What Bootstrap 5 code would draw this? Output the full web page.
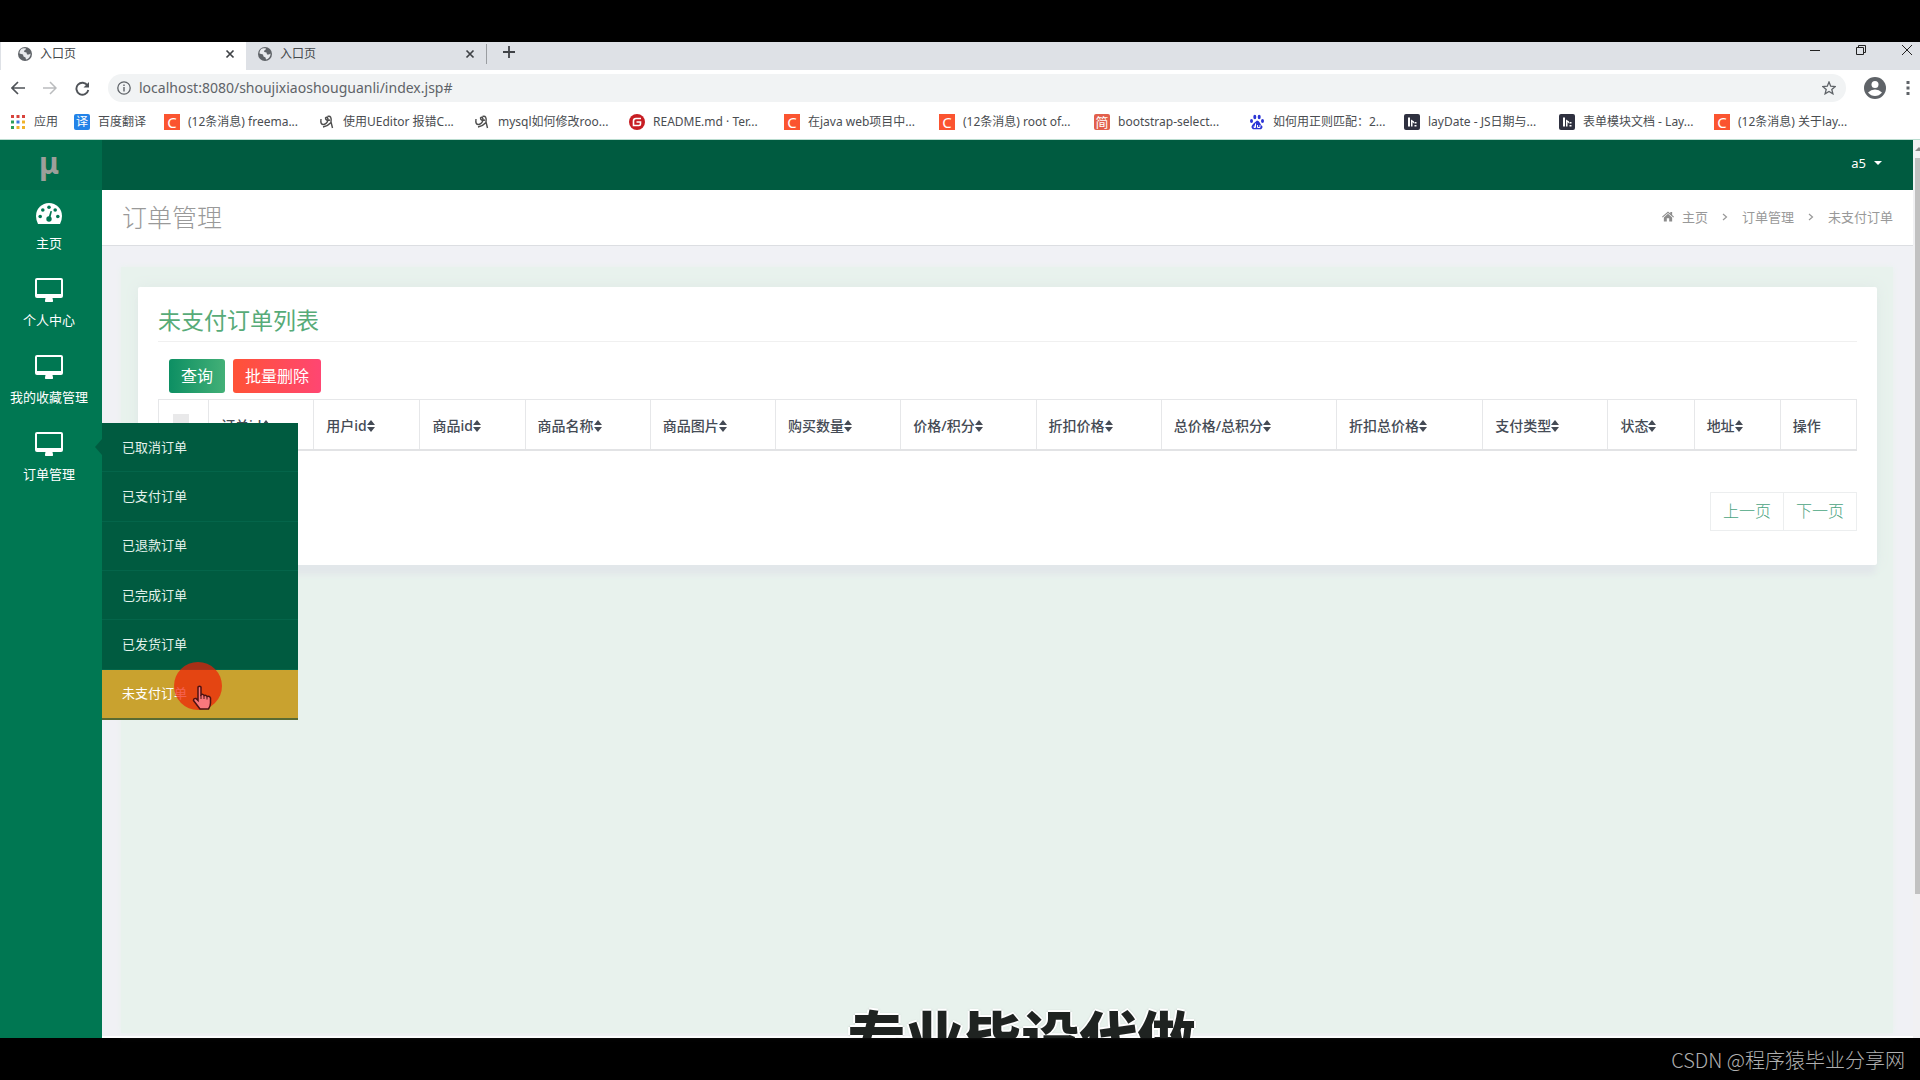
<!DOCTYPE html>
<html lang="zh-CN">
<head>
<meta charset="utf-8">
<meta name="viewport" content="width=device-width, initial-scale=1">
<title>订单管理</title>
<link href="https://cdn.jsdelivr.net/npm/bootstrap@5.3.0/dist/css/bootstrap.min.css" rel="stylesheet">
<style>
  body { font-family: "Noto Sans", "Noto Sans CJK SC", sans-serif; font-size: 13px; line-height: 20px; background: #000; color: #4a4e57; }
  a { text-decoration: none; color: inherit; }
  svg { display: block; flex: none; }
  .edge { height: 42px; flex: none; background: #000; }
  .edge-text { font-family: "Noto Sans CJK SC", sans-serif; font-size: 20px; color: #b0b0b0; font-weight: 300; padding: 2px 15px 0 0; }

  /* browser chrome */
  .strip { height: 28px; background: #dee1e6; font-size: 12px; color: #45494d; }
  .strip button, .tools button { border: 0; background: none; padding: 0; color: inherit; }
  .tab { width: 240px; padding: 0 3px 5px 12px; }
  .tab-on { width: 246px; background: #fff; padding-left: 17px; border-left: 1px solid #dee1e6; }
  .tab-off { border-bottom-left-radius: 8px; }
  .tab-sep { width: 1px; height: 20px; background: #9a9da1; margin-top: 2px; }
  .win { gap: 34px; padding-right: 7px; color: #222; }
  .tools { height: 36px; background: #fff; gap: 18px; padding: 0 6px 0 11px; color: #5f6368; }
  .addr { height: 28px; background: #f1f3f4; border-radius: 14px; padding: 0 10px 0 9px; gap: 8px; }
  .addr input { border: 0; background: none; outline: 0; padding: 0; font-size: 14px; color: #5f6368; min-width: 0; }
  .marks { height: 34px; background: #fff; font-size: 12px; color: #4a4d51; padding-left: 10px; border-bottom: 1px solid #b9dccf; overflow: hidden; white-space: nowrap; }
  .marks a { display: flex; align-items: center; gap: 8px; width: 155px; height: 31px; flex: none; }
  .marks .m-apps { width: 64px; }
  .marks .m-fanyi { width: 90px; }
  .m-ico { width: 16px; height: 16px; line-height: 16px; text-align: center; color: #fff; flex: none; font-size: 13px; }
  .m-c { background: #fb5430; font-size: 15px; }
  .m-blue { background: #2383e8; border-radius: 2px; font-size: 12px; }
  .m-jian { background: #e2604c; border-radius: 2px; font-size: 13px; }

  /* side navigation */
  .side { width: 102px; flex: none; background: #007752; color: #fff; position: relative; z-index: 5; }
  .logo { height: 50px; background: #006c4b; color: #9d9f9b; font-size: 30px; font-weight: 700; line-height: 46px; text-align: center; padding-right: 4px; }
  .side-item { position: relative; height: 77px; padding-top: 10px; }
  .side-link { display: flex; flex-direction: column; align-items: center; gap: 7px; padding-right: 4px; white-space: nowrap; }
  .side-pic { height: 26px; display: flex; align-items: center; }
  .fly { position: absolute; left: 100%; top: 2px; width: 196px; height: 297px; background: #005b40; border-bottom: 2px solid #5a6b33; }
  .fly::before { content: ""; position: absolute; left: -7px; top: 16px; border: 8px solid transparent; border-left-width: 0; border-right: 7px solid #005b40; }
  .fly a { display: flex; align-items: center; flex: 1; padding: 0 0 1px 20px; color: #e4f2ec; border-bottom: 1px solid #04654a; }
  .fly a.now { background: #c9a22f; color: #fff; border: 0; }
  .spot { position: absolute; left: 72px; top: 239px; width: 48px; height: 48px; border-radius: 50%; background: rgba(240, 30, 5, .7); }
  .hand { position: absolute; left: 90px; top: 262px; }

  /* main area */
  .top { height: 50px; background: #005b40; color: #fff; padding: 0 31px 5px 0; }
  .top button { border: 0; background: none; color: #fff; padding: 0; font-size: 13px; }
  .heading { height: 56px; background: #fff; border-bottom: 1px solid #dcdee2; padding: 0 20px 2px; }
  .heading h1 { font-size: 25px; font-weight: 300; color: #999; margin: 0; line-height: 30px; }
  .crumbs { color: #999; gap: 14px; }
  .scene { background: #f0f1f5; padding: 21px 20px 3px 19px; border-bottom: 2px solid #fff; }
  .green-zone { background: #e8f2ed; padding: 20px 16px 20px 17px; box-shadow: 0 0 6px #e8f2ed; }
  .panel { background: #fff; border-radius: 2px; padding: 17px 20px 34px; box-shadow: 0 11px 6px -2px #e2e7ea, 0 0 14px #dfe9e6; }
  .panel h2 { font-size: 23px; line-height: 32px; font-weight: 400; color: #57ab78; margin: 0; padding-bottom: 5px; border-bottom: 1px solid #f0f0f0; }
  .acts { padding: 17px 11px 6px; gap: 8px; }
  .acts .btn { font-size: 16px; line-height: 20px; padding: 7px 12px; height: 34px; border: 0; border-radius: 3px; color: #fff; }
  .b-find { background: linear-gradient(90deg, #0d8f63, #43b077); }
  .b-del { background: linear-gradient(90deg, #ff5236, #ff4672); }
  .orders { table-layout: fixed; margin: 0 0 41px; font-size: 14px; border-color: #e6e7e9; --bs-table-color: #454b55; }
  .orders th { padding: 16px 0 13px 12px; font-weight: 500; line-height: 20px; white-space: nowrap; border-bottom: 2px solid #e2e3e5; }
  .orders th.pick { padding: 0 0 0 14px; vertical-align: top; }
  .orders th > svg { display: inline-block; margin-top: -3px; }
  .pick input { appearance: none; width: 16px; height: 16px; margin: 14px 0 0; background: #e9e9ea; display: block; }
  .w50 { width: 50px } .w76 { width: 76px } .w86 { width: 86px } .w105 { width: 105px } .w106 { width: 106px } .w125 { width: 125px }
  .w135 { width: 135px } .w146 { width: 146px } .w175 { width: 175px }
  .pagination { margin: 0; --bs-pagination-border-radius: 0; }
  .pagination .page-link { font-size: 16px; line-height: 20px; font-weight: 300; padding: 8px 12px 9px; color: #4aa37e; border-color: #eceeef; }
  .caption { position: absolute; left: 0; right: 0; bottom: 0; height: 38px; overflow: hidden; padding-left: 123px; text-align: center; font-size: 58px; font-weight: 900; line-height: 76px; color: #1f2321; text-shadow: 2px 0 #fff, -2px 0 #fff, 0 2px #fff, 0 -2px #fff, 0 0 3px #777; z-index: 3; pointer-events: none; }
  .bar { width: 7px; flex: none; background: #f1f1f3; }
  .bar-arrow { height: 18px; padding: 7px 0 0 2px; }
  .bar-thumb { height: 82%; margin-left: 2px; background: #c1c1c1; }
</style>
<script src="https://cdn.jsdelivr.net/npm/bootstrap@5.3.0/dist/js/bootstrap.bundle.min.js"></script>
</head>
<body class="d-flex flex-column min-vh-100">

<svg width="0" height="0" class="position-absolute" aria-hidden="true">
  <symbol id="globe" viewBox="0 0 14 14"><circle cx="7" cy="7" r="7" fill="#5f6368"/><path d="M3 2.200C4 1.600 6 1 8 1.400L7.400 3 6 3.700 6.300 5 8.500 5.600 9 7.400 11 7.600 12.500 6.500C12.700 9 11 12 8 12.600L7.500 10.500 5.500 9.500 5 7.500 1.500 6.500C1.400 5 2 3.200 3 2.200Z" fill="#e8eaed"/></symbol>
  <symbol id="cross" viewBox="0 0 10 10"><path d="M1.500 1.500 8.500 8.500M8.500 1.500 1.500 8.500" stroke="#3f4246" stroke-width="1.700"/></symbol>
  <symbol id="monitor" viewBox="0 0 28 24"><path fill="#fff" fill-rule="evenodd" d="M2 0H26Q28 0 28 2V18Q28 20 26 20H17.500L18 22.500Q18.500 24 17 24H11Q9.500 24 10 22.500L10.500 20H2Q0 20 0 18V2Q0 0 2 0ZM2 2V16H26V2Z"/></symbol>
  <symbol id="sort" viewBox="0 0 8 12"><path d="M4 0 8 5H0ZM4 12 0 7H8Z" fill="#454b55"/></symbol>
  <symbol id="squig" viewBox="0 0 16 16"><path d="M2 5Q1 11 5 10.500Q9 9 9 5Q8 2 6.500 4Q6.500 7 11 6M8.500 2.500Q13 1 12 8L13.500 14M4 13Q9 12 12 8.500" fill="none" stroke="#4d4d4d" stroke-width="1.400"/></symbol>
  <symbol id="layui" viewBox="0 0 16 16"><rect width="16" height="16" rx="2" fill="#2f3140"/><path d="M4 3.500V12.500H6V3.500ZM7 5.500V12.500H8.500V8L10 9.500V7.500ZM10.500 8V9.500H12.500V8ZM10.500 11V12.500H12.500V11Z" fill="#fff"/></symbol>
  <symbol id="chev" viewBox="0 0 6 8"><path d="M1 1 4.500 4 1 7" fill="none" stroke="#999" stroke-width="1.200"/></symbol>
</svg>

<div class="edge"></div>

<header>
  <div class="strip d-flex">
    <div class="tab tab-on d-flex align-items-center"><svg width="14" height="14"><use href="#globe"/></svg><span class="ms-2 me-auto">入口页</span><button aria-label="关闭"><svg class="me-2" width="10" height="10"><use href="#cross"/></svg></button></div>
    <div class="tab tab-off d-flex align-items-center"><svg width="14" height="14"><use href="#globe"/></svg><span class="ms-2 me-auto">入口页</span><button aria-label="关闭"><svg class="me-2" width="10" height="10"><use href="#cross"/></svg></button></div>
    <div class="tab-sep"></div>
    <button class="ms-3 pb-2" aria-label="新标签页"><svg width="12" height="12" viewBox="0 0 12 12"><path d="M6 0V12M0 6H12" stroke="#3f4246" stroke-width="1.800"/></svg></button>
    <div class="win d-flex ms-auto">
      <button class="pb-2" aria-label="最小化"><svg class="mb-1" width="12" height="12" viewBox="0 0 12 12"><path d="M1 6.500H11" stroke="#222"/></svg></button>
      <button class="pb-2" aria-label="还原"><svg class="mb-1" width="12" height="12" viewBox="0 0 12 12"><path d="M1.500 3.500H8.500V10.500H1.500ZM3.500 3.500V1.500H10.500V8.500H8.500" fill="none" stroke="#222"/></svg></button>
      <button class="pb-2" aria-label="关闭窗口"><svg class="mb-1" width="12" height="12" viewBox="0 0 12 12"><path d="M1 1 11 11M11 1 1 11" stroke="#222"/></svg></button>
    </div>
  </div>
  <div class="tools d-flex align-items-center">
    <button aria-label="后退"><svg width="14" height="14" viewBox="0 0 14 14"><path d="M14 7H1.500M7 1 1 7 7 13" fill="none" stroke="#4f5358" stroke-width="1.700"/></svg></button>
    <button aria-label="前进"><svg width="14" height="14" viewBox="0 0 14 14"><path d="M0 7H12.500M7 1 13 7 7 13" fill="none" stroke="#babcbe" stroke-width="1.500"/></svg></button>
    <button aria-label="刷新"><svg width="15" height="15" viewBox="0 0 15 15"><path d="M12.500 4.500A6 6 0 1 0 13.300 9" fill="none" stroke="#4f5358" stroke-width="1.900"/><path d="M14 1V6.500H8.500Z" fill="#4f5358"/></svg></button>
    <div class="addr d-flex align-items-center flex-grow-1">
      <svg width="14" height="14" viewBox="0 0 14 14"><circle cx="7" cy="7" r="6.200" fill="none" stroke="#5f6368" stroke-width="1.300"/><path d="M7 6V10.500M7 3.500V5" stroke="#5f6368" stroke-width="1.400"/></svg>
      <input class="flex-grow-1" type="text" aria-label="地址" value="localhost:8080/shoujixiaoshouguanli/index.jsp#">
      <svg width="14" height="14" viewBox="0 0 14 14"><path d="M7 1 8.700 5.200 13.200 5.500 9.800 8.400 10.900 12.800 7 10.400 3.100 12.800 4.200 8.400.8 5.500 5.300 5.200Z" fill="none" stroke="#5f6368" stroke-width="1.300"/></svg>
    </div>
    <div class="d-flex align-items-center gap-3">
      <svg width="22" height="22" viewBox="0 0 22 22"><circle cx="11" cy="11" r="11" fill="#5f6368"/><circle cx="11" cy="7.500" r="3.500" fill="#fff"/><path d="M4 15.500Q7 12.500 11 12.500T18 15.500Q15 19 11 19T4 15.500Z" fill="#fff"/></svg>
      <svg width="12" height="14" viewBox="0 0 12 14"><path d="M4.500 0H7.500V3H4.500ZM4.500 5.500H7.500V8.500H4.500ZM4.500 11H7.500V14H4.500Z" fill="#5f6368"/></svg>
    </div>
  </div>
  <nav class="marks d-flex" aria-label="书签">
    <a class="m-apps" href="#"><svg width="16" height="14" viewBox="0 0 16 14"><path d="M1 0h3v3H1zM6.500 0h3v3h-3zM12 0h3v3h-3z" fill="#d8433c"/><path d="M1 5.500h3v3H1z" fill="#2f9e58"/><path d="M6.500 5.500h3v3h-3z" fill="#3b79e0"/><path d="M12 5.500h3v3h-3zM6.500 11h3v3h-3zM12 11h3v3h-3z" fill="#f0b32a"/><path d="M1 11h3v3H1z" fill="#2f9e58"/></svg>应用</a>
    <a class="m-fanyi" href="#"><span class="m-ico m-blue">译</span>百度翻译</a>
    <a href="#"><span class="m-ico m-c">C</span>(12条消息) freema...</a>
    <a href="#"><svg width="16" height="16"><use href="#squig"/></svg>使用UEditor 报错C...</a>
    <a href="#"><svg width="16" height="16"><use href="#squig"/></svg>mysql如何修改roo...</a>
    <a href="#"><svg width="16" height="16" viewBox="0 0 16 16"><circle cx="8" cy="8" r="8" fill="#c71d23"/><path d="M12 4.500H7Q4.500 4.500 4.500 7V11.500H10Q11.500 11.500 11.500 10V8H7.500" fill="none" stroke="#fff" stroke-width="1.600"/></svg>README.md · Ter...</a>
    <a href="#"><span class="m-ico m-c">C</span>在java web项目中...</a>
    <a href="#"><span class="m-ico m-c">C</span>(12条消息) root of...</a>
    <a href="#"><span class="m-ico m-jian">简</span>bootstrap-select...</a>
    <a href="#"><svg width="16" height="16" viewBox="0 0 16 16"><g fill="#2b35d6"><ellipse cx="2.500" cy="7" rx="1.500" ry="2"/><ellipse cx="5.800" cy="3" rx="1.500" ry="2.200"/><ellipse cx="10.200" cy="3" rx="1.500" ry="2.200"/><ellipse cx="13.500" cy="7" rx="1.500" ry="2"/><path d="M8 6.500Q10 6.500 11 9T13.500 12.500Q13.500 15.500 10.500 15.300 8 15 5.500 15.300 2.500 15.500 2.500 12.500 2.700 11 5 9T8 6.500Z"/></g><path d="M6.500 9.500V13.500H5Q4.500 12 6.500 11.500M8.500 11V13.500H11V11" fill="none" stroke="#fff"/></svg>如何用正则匹配：2...</a>
    <a href="#"><svg width="16" height="16"><use href="#layui"/></svg>layDate - JS日期与...</a>
    <a href="#"><svg width="16" height="16"><use href="#layui"/></svg>表单模块文档 - Lay...</a>
    <a href="#"><span class="m-ico m-c">C</span>(12条消息) 关于lay...</a>
  </nav>
</header>

<div class="d-flex flex-grow-1 position-relative">
  <nav class="side" aria-label="主导航">
    <div class="logo">μ</div>
    <div class="side-item"><a class="side-link" href="#"><span class="side-pic"><svg width="26" height="21" viewBox="0 0 26 21"><path d="M2 21Q0 17 0 13A13 13 0 0 1 26 13Q26 17 24 21Z" fill="#fff"/><g fill="#007752"><circle cx="4.200" cy="13.500" r="1.800"/><circle cx="6.800" cy="7" r="1.800"/><circle cx="13" cy="4.200" r="1.800"/><circle cx="19.200" cy="7" r="1.800"/><circle cx="21.800" cy="13.500" r="1.800"/><circle cx="13" cy="16" r="2.700"/><path d="M12.300 15 14.500 8 16 8.300 14.200 15.500Z"/></g></svg></span>主页</a></div>
    <div class="side-item"><a class="side-link" href="#"><span class="side-pic"><svg width="28" height="24"><use href="#monitor"/></svg></span>个人中心</a></div>
    <div class="side-item"><a class="side-link" href="#"><span class="side-pic"><svg width="28" height="24"><use href="#monitor"/></svg></span>我的收藏管理</a></div>
    <div class="side-item"><a class="side-link" href="#"><span class="side-pic"><svg width="28" height="24"><use href="#monitor"/></svg></span>订单管理</a>
      <div class="fly d-flex flex-column">
        <a href="#">已取消订单</a><a href="#">已支付订单</a><a href="#">已退款订单</a><a href="#">已完成订单</a><a href="#">已发货订单</a><a class="now" href="#">未支付订单</a>
        <span class="spot"></span>
        <svg class="hand" width="20" height="25" viewBox="0 0 20 25"><path d="M6 2Q7.500.5 9 2V10Q11 8.500 12 10.500 14 9.500 15 11.500 17.500 10.500 18.500 13V18Q18.500 21 16.500 24H8Q5 20 1.500 15.500 1.500 13 4 13.500L6 15.500Z" fill="#f9787c" stroke="#4c1212" stroke-width="1.500"/><path d="M9 10V14M12 11V14M15 12V14.500" stroke="#4c1212"/></svg>
      </div>
    </div>
  </nav>

  <div class="d-flex flex-column flex-grow-1">
    <div class="top d-flex align-items-center justify-content-end"><button class="d-flex align-items-center" type="button">a5<svg class="ms-2" width="8" height="4" viewBox="0 0 8 4"><path d="M0 0H8L4 4Z" fill="#fff"/></svg></button></div>
    <div class="heading d-flex align-items-center justify-content-between">
      <h1>订单管理</h1>
      <nav class="crumbs d-flex align-items-center" aria-label="面包屑">
        <a class="d-flex align-items-center" href="#"><svg class="me-2" width="12" height="11" viewBox="0 0 13 11"><path d="M6.500 0 9 2.200V.7H11V4L13 5.800 12.300 6.600 6.500 1.600.7 6.600 0 5.800ZM6.500 2.600 11 6.500V11H7.800V7.500H5.200V11H2V6.500Z" fill="#8c8c8c"/></svg>主页</a>
        <svg width="6" height="8"><use href="#chev"/></svg>
        <a href="#">订单管理</a>
        <svg width="6" height="8"><use href="#chev"/></svg>
        <span>未支付订单</span>
      </nav>
    </div>
    <main class="scene flex-grow-1 d-flex flex-column">
      <div class="green-zone flex-grow-1">
        <section class="panel">
          <h2>未支付订单列表</h2>
          <div class="acts d-flex"><button class="btn b-find" type="button">查询</button><button class="btn b-del" type="button">批量删除</button></div>
          <table class="table table-bordered orders">
            <colgroup><col class="w50"><col class="w105"><col class="w106"><col class="w105"><col class="w125"><col class="w125"><col class="w125"><col class="w135"><col class="w125"><col class="w175"><col class="w146"><col class="w125"><col class="w86"><col class="w86"><col class="w76"></colgroup>
            <thead><tr>
              <th class="pick"><input type="checkbox" aria-label="全选"></th>
              <th>订单id<svg width="8" height="12"><use href="#sort"/></svg></th>
              <th>用户id<svg width="8" height="12"><use href="#sort"/></svg></th>
              <th>商品id<svg width="8" height="12"><use href="#sort"/></svg></th>
              <th>商品名称<svg width="8" height="12"><use href="#sort"/></svg></th>
              <th>商品图片<svg width="8" height="12"><use href="#sort"/></svg></th>
              <th>购买数量<svg width="8" height="12"><use href="#sort"/></svg></th>
              <th>价格/积分<svg width="8" height="12"><use href="#sort"/></svg></th>
              <th>折扣价格<svg width="8" height="12"><use href="#sort"/></svg></th>
              <th>总价格/总积分<svg width="8" height="12"><use href="#sort"/></svg></th>
              <th>折扣总价格<svg width="8" height="12"><use href="#sort"/></svg></th>
              <th>支付类型<svg width="8" height="12"><use href="#sort"/></svg></th>
              <th>状态<svg width="8" height="12"><use href="#sort"/></svg></th>
              <th>地址<svg width="8" height="12"><use href="#sort"/></svg></th>
              <th>操作</th>
            </tr></thead>
          </table>
          <ul class="pagination justify-content-end"><li class="page-item"><a class="page-link" href="#">上一页</a></li><li class="page-item"><a class="page-link" href="#">下一页</a></li></ul>
        </section>
      </div>
    </main>
  </div>

  <div class="bar"><div class="bar-arrow"><svg width="5" height="4" viewBox="0 0 5 4"><path d="M0 4 4 0 5 1V4Z" fill="#8a8a8a"/></svg></div><div class="bar-thumb"></div></div>
  <div class="caption">专业毕设代做</div>
</div>

<footer class="edge edge-text d-flex align-items-center justify-content-end">CSDN @程序猿毕业分享网</footer>
</body>
</html>
